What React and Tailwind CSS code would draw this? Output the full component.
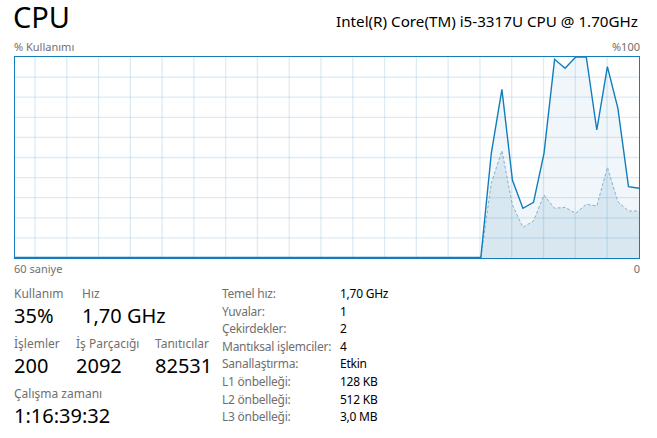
import React from 'react';

const STEP = 10.55;
const usage = [201, 96.3, 32.3, 123, 151.3, 145.3, 96.3, 2.3, 11.3, 0, 0, 73, 9.7, 51.3, 129.7, 131.3];
const kernel = [201, 126.3, 93.7, 148, 170.3, 164, 138, 151.3, 150.3, 156.3, 147.3, 149, 110.3, 144.7, 154, 154];

const toPoints = (vals) =>
  vals.map((y, i) => `${(624 - (vals.length - 1 - i) * STEP).toFixed(1)},${y}`).join(' ');

function UsageChart() {
  const firstX = 624 - (usage.length - 1) * STEP;
  const vLines = Array.from({ length: 19 }, (_, k) => 20 + k * 31.78);
  const hLines = Array.from({ length: 9 }, (_, k) => 20.1 * (k + 1));

  return (
    <svg width="624" height="201" viewBox="0 0 624 201" className="block">
      {/* usage area */}
      <polygon points={`0,201 ${toPoints(usage)} 624,201`} fill="#f1f6fa" />
      {/* kernel area */}
      <polygon points={`${firstX},201 ${toPoints(kernel)} 624,201`} fill="#d9e7f1" />
      {/* grid */}
      {vLines.map((x) => (
        <line key={`v${x}`} x1={x} y1="0" x2={x} y2="201" stroke="#117dbb" strokeOpacity="0.15" strokeWidth="1.3" />
      ))}
      {hLines.map((y) => (
        <line key={`h${y}`} x1="0" y1={y} x2="624" y2={y} stroke="#117dbb" strokeOpacity="0.15" strokeWidth="1.3" />
      ))}
      <polyline points={toPoints(kernel)} fill="none" stroke="#7fb2d5" strokeWidth="1" strokeDasharray="3 2" />
      <polyline points={`0,200.5 ${firstX},200.5 ${toPoints(usage)}`} fill="none" stroke="#117dbb" strokeWidth="1.4" strokeLinejoin="miter" />
    </svg>
  );
}

function Stat({ label, value, className = '' }) {
  return (
    <div className={className}>
      <div className="text-[12px] leading-[16px] text-[#707070]">{label}</div>
      <div className="text-[20px] leading-[28px] text-black">{value}</div>
    </div>
  );
}

const specs = [
  ['Temel hız:', '1,70 GHz'],
  ['Yuvalar:', '1'],
  ['Çekirdekler:', '2'],
  ['Mantıksal işlemciler:', '4'],
  ['Sanallaştırma:', 'Etkin'],
  ['L1 önbelleği:', '128 KB'],
  ['L2 önbelleği:', '512 KB'],
  ['L3 önbelleği:', '3,0 MB'],
];

export default function App() {
  return (
    <div
      className="w-[657px] h-[438px] bg-white pl-[14px] pr-[17px]"
      style={{ fontFamily: '"Noto Sans", "Open Sans", sans-serif' }}
    >
      {/* Header */}
      <div className="flex justify-between h-[37px]">
        <div className="text-[29px] leading-[34px] text-black -ml-[1px]">CPU</div>
        <div className="self-end text-[15.2px] leading-[20px] text-black pb-[6px] mr-[2px]">Intel(R) Core(TM) i5-3317U CPU @ 1.70GHz</div>
      </div>

      <div className="flex justify-between text-[11px] leading-[19px] text-[#707070]">
        <span>% Kullanımı</span>
        <span>%100</span>
      </div>

      <div className="border border-[#117dbb] w-[626px] h-[203px]">
        <UsageChart />
      </div>

      <div className="flex justify-between text-[11px] leading-[20px] text-[#707070]">
        <span>60 saniye</span>
        <span>0</span>
      </div>

      {/* Stats */}
      <div className="flex items-start mt-[7px]">
        <div className="w-[208px] flex flex-col gap-[6px]">
          <div className="flex">
            <Stat label="Kullanım" value="35%" className="w-[68px]" />
            <Stat label="Hız" value="1,70 GHz" />
          </div>
          <div className="flex">
            <Stat label="İşlemler" value="200" className="w-[62px]" />
            <Stat label="İş Parçacığı" value="2092" className="w-[79px]" />
            <Stat label="Tanıtıcılar" value="82531" />
          </div>
          <Stat label="Çalışma zamanı" value="1:16:39:32" />
        </div>

        <div className="grid grid-cols-[118px_auto] text-[12px] leading-[17.6px] tracking-[-0.25px] -mt-[1px]">
          {specs.map(([k, v]) => (
            <React.Fragment key={k}>
              <div className="text-[#707070] whitespace-nowrap">{k}</div>
              <div className="text-black">{v}</div>
            </React.Fragment>
          ))}
        </div>
      </div>
    </div>
  );
}
